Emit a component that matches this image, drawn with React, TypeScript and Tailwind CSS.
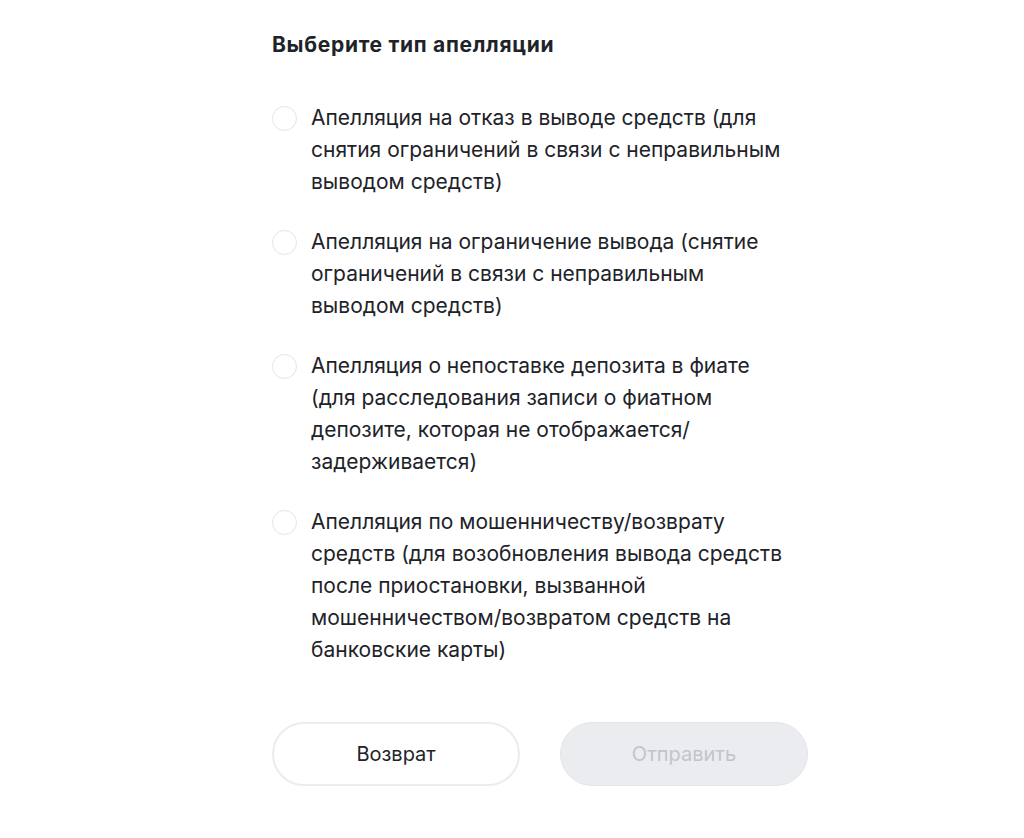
const OPTIONS = [
  "Апелляция на отказ в выводе средств (для снятия ограничений в связи с неправильным выводом средств)",
  "Апелляция на ограничение вывода (снятие ограничений в связи с неправильным выводом средств)",
  "Апелляция о непоставке депозита в фиате (для расследования записи о фиатном депозите, которая не отображается/ задерживается)",
  "Апелляция по мошенничеству/возврату средств (для возобновления вывода средств после приостановки, вызванной мошенничеством/возвратом средств на банковские карты)",
];

export default function App() {
  return (
    <div className="min-h-[838px] w-full bg-white font-['Inter',sans-serif] text-[#1e2329]">
      <div className="ml-[272px] w-[536px] pt-[30px]">
        <h2 className="text-[21px] font-bold leading-[30px] tracking-[0.7px]">Выберите тип апелляции</h2>
        <div className="mt-[42px] flex flex-col gap-[28px]">
          {OPTIONS.map((text, i) => (
            <label key={i} className="flex items-start gap-[14px] cursor-pointer">
              <span className="mt-[4px] h-[25px] w-[25px] shrink-0 rounded-full border border-[#e3e5e8] bg-white" />
              <span className="w-[474px] text-[21px] font-normal leading-[32px]">{text}</span>
            </label>
          ))}
        </div>
        <div className="mt-[56px] flex gap-[40px]">
          <button className="h-[64px] w-[248px] rounded-full border-2 border-[#eaecef] bg-white text-[20px] font-normal text-[#1e2329]">
            Возврат
          </button>
          <button disabled className="h-[64px] w-[248px] rounded-full border border-[#e3e5e8] bg-[#eaecef] text-[20px] font-normal text-[#c1c5cb]">
            Отправить
          </button>
        </div>
      </div>
    </div>
  );
}
